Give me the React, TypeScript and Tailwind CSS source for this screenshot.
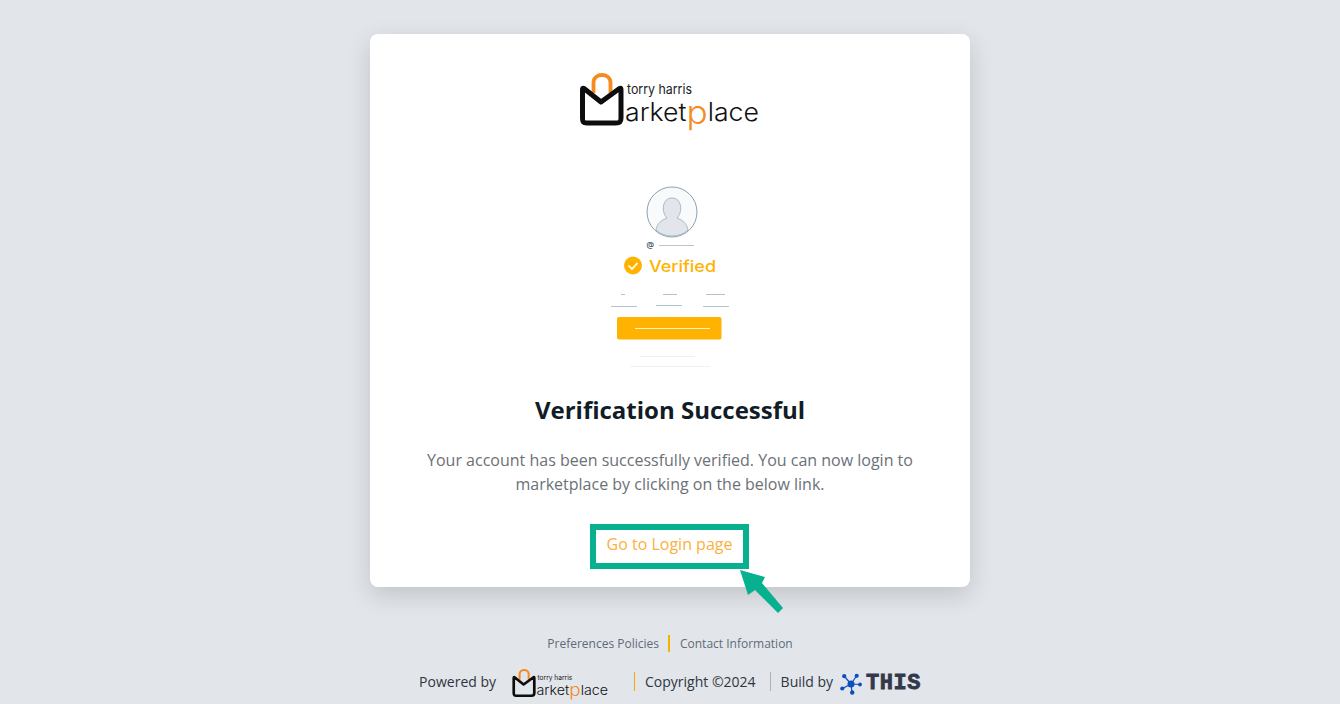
import React from 'react';

const MarketplaceLogo = ({ className }: { className: string }) => (
  <svg viewBox="0 0 180 58" className={className} aria-label="Torry Harris Marketplace">
    <path d="M13.500 20 V9.500 C13.500 -0.500 30.500 -0.500 30.500 9.500 V20" fill="none" stroke="#f58a1f" strokeWidth="3.800" />
    <path
      d="M4 15.500 L21 29 L39.500 15.500 C41 14.800 41 15.500 41 17 V45 C41 49 39.500 50 36 50 H7 C3 50 2.500 49 2.500 45 V17 C2.500 15.500 2.800 14.800 4 15.500 Z"
      fill="none"
      stroke="#0d0d0d"
      strokeWidth="5"
      strokeLinejoin="round"
    />
    <text x="47" y="21" fontFamily="Inter, sans-serif" fontWeight="400" fontSize="13.500" fill="#222222" textLength="65" lengthAdjust="spacingAndGlyphs">
      torry harris
    </text>
    <text x="45" y="48" fontFamily="Inter, sans-serif" fontWeight="300" fontSize="25" fill="#111111" textLength="134" lengthAdjust="spacingAndGlyphs">
      arket
      <tspan fill="#f58a1f" fontSize="33" dy="3">
        p
      </tspan>
      <tspan dy="-3">lace</tspan>
    </text>
  </svg>
);

const VerifiedPreview = () => (
  <svg viewBox="0 0 160 195" className="h-[195px] w-[160px]">
    <circle cx="82" cy="32" r="25" fill="#f8fafc" stroke="#6f8a9b" strokeWidth="0.800" />
    <path d="M66 50 C67 43 72 40 77 38 C71 32 72 18 82 18 C92 18 93 32 87 38 C92 40 97 43 98 50 C90 58 74 58 66 50 Z" fill="#e2e6ec" stroke="#8fa3b0" strokeWidth="0.700" />
    <text x="56.500" y="66.500" fontFamily="Inter, sans-serif" fontSize="7.500" fontWeight="600" fill="#3f5666">
      @
    </text>
    <path d="M69 65.500 H104" stroke="#b9c6ce" strokeWidth="1" />
    <circle cx="43" cy="85.500" r="9" fill="#ffb300" />
    <path d="M38.500 85.500 L42 89 L47.500 83" fill="none" stroke="#fff" strokeWidth="1.700" />
    <text x="59" y="91.500" fontFamily="Inter, sans-serif" fontWeight="500" fontSize="16" fill="#ffb300" textLength="67" lengthAdjust="spacingAndGlyphs">
      Verified
    </text>
    <g stroke="#b4c2cb" strokeWidth="1">
      <path d="M31 114.500 H35 M73 114.500 H87 M116 114.500 H135 M21 126.500 H47 M66 125.500 H92 M113 126.500 H139" />
    </g>
    <rect x="27" y="137" width="104.500" height="22.500" rx="2" fill="#ffb300" />
    <path d="M45 148.500 H120" stroke="#fff2cc" strokeWidth="1.200" />
    <path d="M50 176.500 H105 M40 186.500 H120" stroke="#f0f0f0" strokeWidth="1" />
  </svg>
);

const ThisLogo = () => (
  <div className="flex items-center gap-[4px]">
    <svg viewBox="0 0 22 22" className="h-[22px] w-[22px]" fill="#0b4fc0" stroke="#0b4fc0">
      <path d="M11 11 L4.500 3.500 M11 11 L16.500 3 M11 11 L20 11.500 M11 11 L12 19 M11 11 L2.500 15.500" strokeWidth="1.200" />
      <circle cx="11" cy="11" r="3.500" stroke="none" />
      <circle cx="4.200" cy="3.200" r="2.100" stroke="none" />
      <circle cx="16.700" cy="2.800" r="2.100" stroke="none" />
      <circle cx="20" cy="11.500" r="1.900" stroke="none" />
      <circle cx="12.200" cy="19.500" r="2.200" stroke="none" />
      <circle cx="2.300" cy="15.500" r="2.100" stroke="none" />
    </svg>
    <span className="font-['Liberation_Mono',monospace] text-[22px] leading-none font-bold tracking-[0.5px] text-[#33384a] [-webkit-text-stroke:0.8px_#33384a]">
      THIS
    </span>
  </div>
);

export default function App() {
  return (
    <div className="flex h-[704px] flex-col items-center overflow-hidden bg-[#e2e5ea] pt-[34px] font-['Open_Sans',sans-serif]">
      {/* Card */}
      <div className="flex h-[553px] w-[600px] flex-col items-center rounded-lg bg-white pt-[39px] shadow-[0_8px_24px_rgba(0,0,0,0.15)]">
        <MarketplaceLogo className="h-[58px] w-[180px]" />
        <div className="mt-[49px]">
          <VerifiedPreview />
        </div>
        <h1 className="mt-[19px] text-2xl leading-[32px] font-bold text-[#111c27]">Verification Successful</h1>
        <p className="mt-[22px] w-[520px] text-center text-base leading-6 text-[#6b7176]">
          Your account has been successfully verified. You can now login to marketplace by clicking on the below link.
        </p>
        <div className="relative mt-[28px] mr-[1px]">
          <a className="block h-[45px] w-[159px] border-[6px] border-[#07b08f] text-center text-base leading-[29px] text-[#fbb040]">
            Go to Login page
          </a>
          <svg viewBox="0 0 44 44" className="absolute top-[45px] left-[150px] h-[44px] w-[44px]">
            <path d="M0 1 L25 8 L22 14 L43 39 L38 44 L15 21 L8 26 Z" fill="#07b08f" />
          </svg>
        </div>
      </div>

      {/* Footer links */}
      <div className="mt-[48px] flex h-[17px] items-center text-xs text-[#5f6b76]">
        <span className="pr-[9px]">Preferences Policies</span>
        <span className="mr-[10px] h-[17px] w-[2px] bg-[#f5b400]" />
        <span>Contact Information</span>
      </div>

      {/* Powered by row */}
      <div className="mt-[17px] flex h-[31px] items-center text-sm text-[#2f3640]">
        <span className="-mt-[6px]">Powered by</span>
        <MarketplaceLogo className="mr-[25px] ml-[16px] h-[31px] w-[97px]" />
        <span className="-mt-[6px] mr-[10px] h-[19px] w-[1px] bg-[#f5a800]" />
        <span className="-mt-[6px]">Copyright ©2024</span>
        <span className="-mt-[6px] mr-[10px] ml-[14px] h-[19px] w-[1px] bg-[#aab2bb]" />
        <span className="-mt-[6px]">Build by</span>
        <div className="-mt-[2px] ml-[7px]">
          <ThisLogo />
        </div>
      </div>
    </div>
  );
}
